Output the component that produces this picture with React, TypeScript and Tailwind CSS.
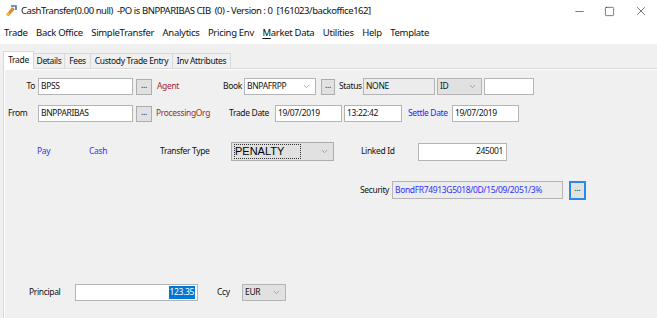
import { ChevronDown, Minus, Square, X } from 'lucide-react'

const font = { fontFamily: '"Noto Sans", "Open Sans", sans-serif' }

function Field({ value, className = '', align = 'left' }: { value: string; className?: string; align?: 'left' | 'right' }) {
  return (
    <div
      className={`h-[17px] border border-[#b4b4b4] bg-white flex items-center px-[2px] text-[#111] overflow-hidden whitespace-nowrap ${align === 'right' ? 'justify-end' : ''} ${className}`}
    >
      {value}
    </div>
  )
}

function Dots({ className = '' }: { className?: string }) {
  return (
    <div className={`h-[16px] border border-[#adadad] bg-[#e1e1e1] flex items-center justify-center leading-none pb-[3px] text-[#222] ${className}`}>
      ...
    </div>
  )
}

function Combo({ value, className = '', white = false }: { value: string; className?: string; white?: boolean }) {
  return (
    <div
      className={`h-[17px] border border-[#b4b4b4] flex items-center justify-between pl-[2px] pr-[4px] text-[#111] ${white ? 'bg-white' : 'bg-[#e1e1e1]'} ${className}`}
    >
      <span>{value}</span>
      <ChevronDown className="w-[9px] h-[9px] text-[#707070]" strokeWidth={1.5} />
    </div>
  )
}

export default function App() {
  const menus = ['Trade', 'Back Office', 'SimpleTransfer', 'Analytics', 'Pricing Env', 'Market Data', 'Utilities', 'Help', 'Template']
  const tabs = ['Details', 'Fees', 'Custody Trade Entry', 'Inv Attributes']

  return (
    <div className="w-[657px] h-[318px] bg-[#f0f0f0] overflow-hidden text-[#111]" style={font}>
      {/* title bar */}
      <div className="h-[22px] bg-white flex items-center">
        <svg width="14" height="14" viewBox="0 0 14 14" className="ml-[4px]">
          <path d="M2 11 L8 3 L11 5 L5 12 Z" fill="#e58a2b" />
          <path d="M7 2 L12 2 L12 6" fill="none" stroke="#3a78c3" strokeWidth="1.6" />
          <circle cx="4" cy="10" r="1.6" fill="#f3c14b" />
        </svg>
        <span className="ml-[3px] text-[9.5px] tracking-[-0.45px] whitespace-nowrap">
          CashTransfer(0.00 null) &nbsp;-PO is BNPPARIBAS CIB &nbsp;(0) - Version : 0 &nbsp;[161023/backoffice162]
        </span>
        <div className="ml-auto flex items-center">
          <Minus className="w-[13px] h-[13px] mr-[18px]" strokeWidth={1} />
          <Square className="w-[11px] h-[11px] mr-[19px]" strokeWidth={1.2} />
          <X className="w-[14px] h-[14px] mr-[9px]" strokeWidth={1} />
        </div>
      </div>

      {/* menu bar */}
      <div className="h-[22px] bg-white flex items-center pl-[4px] gap-[8.5px] text-[9.5px] tracking-[-0.3px] whitespace-nowrap">
        {menus.map((m) =>
          m === 'Market Data' ? (
            <span key={m}>
              <span className="underline underline-offset-2">M</span>arket Data
            </span>
          ) : (
            <span key={m}>{m}</span>
          ),
        )}
      </div>

      {/* tabs */}
      <div className="h-[24px] flex items-end pl-[3px] text-[8.5px] tracking-[-0.35px] whitespace-nowrap">
        <div className="h-[18px] w-[31px] justify-center bg-white border border-[#d9d9d9] border-b-0 flex items-center relative top-[1px] z-10">Trade</div>
        <div className="h-[15px] w-[31px] justify-center border border-[#d9d9d9] border-l-0 border-b-0 flex items-center">{tabs[0]}</div>
        <div className="h-[15px] w-[26px] justify-center border border-[#d9d9d9] border-l-0 border-b-0 flex items-center">{tabs[1]}</div>
        <div className="h-[15px] w-[82px] justify-center border border-[#d9d9d9] border-l-0 border-b-0 flex items-center">{tabs[2]}</div>
        <div className="h-[15px] w-[58px] justify-center border border-[#d9d9d9] border-l-0 border-b-0 flex items-center">{tabs[3]}</div>
      </div>

      {/* panel */}
      <div className="ml-[3px] h-[260px] border-t border-l border-[#d9d9d9] bg-[#f0f0f0] shadow-[inset_1px_1px_0_#ffffff] text-[8.5px] tracking-[-0.35px] whitespace-nowrap">
        {/* row 1 */}
        <div className="flex items-center h-[17px] mt-[9px]">
          <span className="w-[31px] text-right">To</span>
          <Field value="BPSS" className="ml-[3px] w-[95px]" />
          <Dots className="ml-[3px] w-[16px]" />
          <span className="ml-[5px] w-[64px] text-[#a0282d]">Agent</span>
          <span className="w-[21px] text-right">Book</span>
          <Combo value="BNPAFRPP" white className="ml-[2px] w-[72px]" />
          <Dots className="ml-[5px] w-[14px]" />
          <span className="ml-[4px] w-[23px]">Status</span>
          <div className="ml-[1px] w-[72px] h-[17px] border border-[#b4b4b4] bg-[#ececec] flex items-center px-[2px]">NONE</div>
          <Combo value="ID" className="ml-[2px] w-[45px]" />
          <Field value="" className="ml-[2px] w-[50px]" />
        </div>

        {/* row 2 */}
        <div className="flex items-center h-[17px] mt-[10px]">
          <span className="w-[31px] pl-[4px]">From</span>
          <Field value="BNPPARIBAS" className="ml-[3px] w-[95px]" />
          <Dots className="ml-[3px] w-[16px]" />
          <span className="ml-[4px] w-[73px] text-[#a0282d]">ProcessingOrg</span>
          <span className="w-[43px]">Trade Date</span>
          <Field value="19/07/2019" className="ml-[3px] w-[67px]" />
          <Field value="13:22:42" className="ml-[2px] w-[58px]" />
          <span className="ml-[6px] w-[42px] text-[#2424f5]">Settle Date</span>
          <Field value="19/07/2019" className="ml-[2px] w-[67px]" />
        </div>

        {/* row 3 */}
        <div className="flex items-center h-[19px] mt-[20px]">
          <span className="ml-[33px] w-[52px] text-[#3030ff]">Pay</span>
          <span className="w-[71px] text-[#3030ff]">Cash</span>
          <span className="w-[71px]">Transfer Type</span>
          <div className="w-[103px] h-[19px] border border-[#adadad] bg-[#e1e1e1] flex items-center justify-between pl-[2px] pr-[4px]">
            <span
              className="h-[15px] w-[67px] border border-dotted border-[#333] flex items-center text-[11px] tracking-normal text-black leading-none"
              style={{ fontFamily: '"Liberation Sans", Arial, sans-serif' }}
            >
              PENALTY
            </span>
            <ChevronDown className="w-[9px] h-[9px] text-[#707070]" strokeWidth={1.5} />
          </div>
          <span className="ml-[27px] w-[57px]">Linked Id</span>
          <Field value="245001" align="right" className="w-[89px] h-[18px] pr-[3px]" />
        </div>

        {/* row 4 */}
        <div className="flex items-center h-[18px] mt-[20px]">
          <span className="ml-[356px] w-[32px]">Security</span>
          <div className="w-[171px] h-[18px] border border-[#b4b4b4] bg-[#ececec] flex items-center px-[2px] text-[#3030ff]">
            BondFR74913G5018/0D/15/09/2051/3%
          </div>
          <div className="ml-[6px] w-[17px] h-[19px] border-2 border-[#2b8ae0] bg-[#e1e1e1] flex items-center justify-center leading-none pb-[3px]">
            ...
          </div>
        </div>

        {/* row 5 */}
        <div className="flex items-center h-[17px] mt-[85px]">
          <span className="ml-[25px] w-[46px]">Principal</span>
          <div className="w-[123px] h-[17px] border border-[#b4b4b4] bg-white flex items-center justify-end pr-[2px]">
            <span className="bg-[#0078d7] text-white px-[1px]">123.35</span>
          </div>
          <span className="ml-[19px] w-[25px]">Ccy</span>
          <Combo value="EUR" className="w-[44px]" />
        </div>
      </div>
    </div>
  )
}
